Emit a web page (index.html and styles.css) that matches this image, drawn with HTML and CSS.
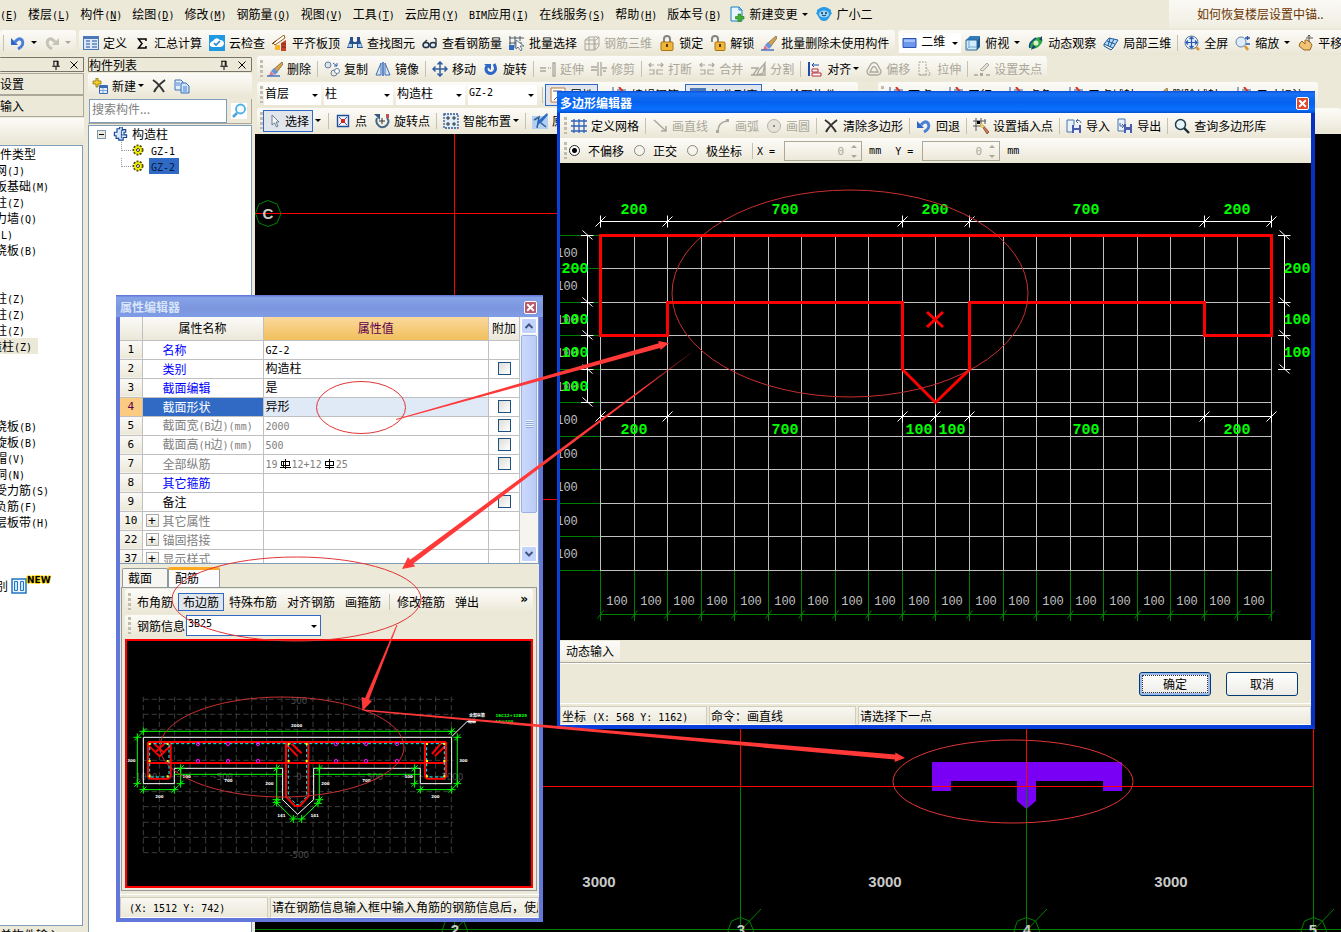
FILE: index.html
```html
<!DOCTYPE html>
<html lang="zh-CN">
<head>
<meta charset="utf-8">
<title>多边形编辑器</title>
<link rel="stylesheet" href="styles.css">
</head>
<body>
<svg class="defs" aria-hidden="true">
<defs>
<linearGradient id="fade" gradientUnits="userSpaceOnUse" x1="691" y1="353" x2="640" y2="391"><stop offset="0" stop-color="#f33" stop-opacity="0.2"/><stop offset="1" stop-color="#ff3838"/></linearGradient>
<marker id="th" markerUnits="userSpaceOnUse" markerWidth="14" markerHeight="14" refX="7" refY="7"><path d="M7 1V13M2 12L12 2" stroke="#fff" fill="none"/></marker>
<marker id="tv" markerUnits="userSpaceOnUse" markerWidth="14" markerHeight="14" refX="7" refY="7"><path d="M0 7H13M2 2L12 11" stroke="#fff" fill="none"/></marker>
<marker id="tg" markerUnits="userSpaceOnUse" markerWidth="12" markerHeight="14" refX="6" refY="7"><path d="M3 11L9 3" stroke="#008000" fill="none"/></marker>
<marker id="ts" markerUnits="userSpaceOnUse" markerWidth="30" markerHeight="30" refX="15" refY="15"><path d="M15 3V27M3 15H27M6 24L24 6" stroke="#0f0" stroke-width="3" fill="none"/></marker>
</defs>
<symbol id="undo" viewBox="0 0 16 16"><path d="M5 7Q9 2 12 5Q15 10 8 14" fill="none" stroke="#4a7fd8" stroke-width="3"/><path d="M1 3V10H8Z" fill="#2f66cc"/></symbol>
<symbol id="redo" viewBox="0 0 16 16"><path d="M11 7Q7 2 4 5Q1 10 8 14" fill="none" stroke="#c5c2b6" stroke-width="3"/><path d="M15 3V10H8Z" fill="#c5c2b6"/></symbol>
<symbol id="define" viewBox="0 0 16 16"><path d="M0 1H16V15H0Z" fill="#4a77b8"/><path d="M1 4H15V14H1Z" fill="#dce9fb"/><path d="M3 6H7M3 9H7M3 12H7M9 6H14M9 9H14M9 12H14" stroke="#1e4b92"/></symbol>
<symbol id="sum" viewBox="0 0 16 16"><path d="M12 6V4H4.500L8 8.500L4.500 13H12V11" fill="none" stroke="#000" stroke-width="1.500"/></symbol>
<symbol id="cloud" viewBox="0 0 16 16"><path d="M0 0H16V16H0Z" fill="#1f9ae0"/><path d="M4 12Q0 12 1 8Q3 6 4 6Q7 1 11 5Q15 5 15 9Q14 12 12 12Z" fill="#fff"/><path d="M5 8L7 10L11 6" fill="none" stroke="#1f8ad0" stroke-width="1.6"/></symbol>
<symbol id="roof" viewBox="0 0 16 16"><path d="M1 8L12 0L13 3L3 10Z" fill="#fff" stroke="#96601c"/><path d="M3 10H8V15H3Z" fill="#f6b626"/><path d="M9 8L14 5V16H9Z" fill="#c6422a"/><path d="M0 9L4 6M10 9H14M10 12H14" stroke="#6a2a12"/></symbol>
<symbol id="bino" viewBox="0 0 16 16"><path d="M3 2H6V6L7 7H9L10 6V2H13V5L16 13H10V9H6V13H0L3 5Z" fill="#26518f"/><path d="M2 9H5V12H1ZM11 9H14L15 12H11Z" fill="#a9c9ef"/></symbol>
<symbol id="glass" viewBox="0 0 16 16"><ellipse cx="4" cy="10" rx="3" ry="2.6" fill="#dfe9ee" stroke="#243344" stroke-width="1.5"/><ellipse cx="11" cy="10" rx="3" ry="2.6" fill="#dfe9ee" stroke="#243344" stroke-width="1.5"/><path d="M2 8L5 5M14 9V4L12 3" fill="none" stroke="#243344" stroke-width="1.3"/></symbol>
<symbol id="batch" viewBox="0 0 16 16"><path d="M1 1V15M6 1V13M0 3H15M0 8H13M11 1V6" stroke="#4b5968" fill="none"/><path d="M0 10H5V15H0Z" fill="#2f6ac4"/><path d="M7 5V14L9 12L12 16L13 14L11 11H15Z" fill="#fff" stroke="#566a7e" stroke-width=".9"/></symbol>
<symbol id="cube3" viewBox="0 0 16 16"><path d="M1 5L5 2H15V11L11 15H1ZM5 2V15M10 2V15M1 9H15M11 5V15M1 5H12L15 2" fill="none" stroke="#aaa89c"/></symbol>
<symbol id="lock" viewBox="0 0 16 16"><path d="M5 8V4Q5 1 8 1Q11 1 11 4V8" fill="none" stroke="#858585" stroke-width="2"/><rect x="2" y="7" width="12" height="8.500" rx="1" fill="#f0b638" stroke="#a97412"/><path d="M8 9V12" stroke="#543708" stroke-width="2"/></symbol>
<symbol id="unlock" viewBox="0 0 16 16"><path d="M2 7V4Q2 1 5 1Q8 1 8 4V8" fill="none" stroke="#858585" stroke-width="2"/><rect x="5" y="7" width="10" height="8.500" rx="1" fill="#f0b638" stroke="#a97412"/><path d="M10 9V12" stroke="#543708" stroke-width="2"/></symbol>
<symbol id="brush" viewBox="0 0 16 16"><path d="M15 1L7 8L10 11L16 3Z" fill="#d8a248" stroke="#6a5c3c" stroke-width=".7"/><path d="M7 7L11 11L8 14L4 10Z" fill="#6a92d6"/><path d="M4 10L7 14L2 15Z" fill="#e07090"/><path d="M0 15H13" stroke="#2b60b8" stroke-width="1.3"/></symbol>
<symbol id="flat" viewBox="0 0 16 16"><path d="M1 3.500H14V12.500H1Z" fill="#6d97ec" stroke="#2853ae"/><path d="M2 4.500H13V7H2Z" fill="#a5c1fb"/></symbol>
<symbol id="cube" viewBox="0 0 16 16"><path d="M1 5L5 1H15L12 5Z" fill="#2f7cb8"/><path d="M12 5L15 1V12L12 15Z" fill="#1c5a90"/><path d="M1 5H12V15H1Z" fill="#d4ebfb" stroke="#29699e"/><path d="M4 5V12H12M4 12L1 15" fill="none" stroke="#72a6cc"/></symbol>
<symbol id="orbit" viewBox="0 0 16 16"><ellipse cx="8" cy="8" rx="7.500" ry="4.500" transform="rotate(-40 8 8)" fill="#2fa647"/><path d="M2 13Q0 8 8 3" stroke="#1b4f86" fill="none" stroke-width="1.6"/><circle cx="8" cy="8" r="2.500" fill="#d9f1c9"/><path d="M3 15L5 10L8 12ZM11 4L14 1V6Z" fill="#1d3f70"/></symbol>
<symbol id="part" viewBox="0 0 16 16"><path d="M1 9L6 3L15 5L10 13Z" fill="#b9daf4" stroke="#1e5c9c"/><path d="M4 6L12 9M7 3L5 11M11 4L7 12M10 13L8 15L1 11V9" fill="none" stroke="#1e5c9c"/></symbol>
<symbol id="full" viewBox="0 0 16 16"><circle cx="7.500" cy="7.500" r="6.500" fill="#e4effa" stroke="#5d7896"/><path d="M7.500 2V13M2 7.500H13M5.500 4L7.500 2L9.500 4M5.500 11L7.500 13L9.500 11M4 5.500L2 7.500L4 9.500M11 5.500L13 7.500L11 9.500" fill="none" stroke="#2856b0" stroke-width="1.2"/><path d="M12 12L15 15" stroke="#d89634" stroke-width="2.500"/></symbol>
<symbol id="zoom" viewBox="0 0 16 16"><circle cx="6" cy="7" r="5" fill="#dcecfa" stroke="#6888a8"/><path d="M10 11L13 15" stroke="#d89634" stroke-width="2.600"/><path d="M10 3H15M12.500 1V5M11 9H15" stroke="#2856b0" stroke-width="1.4"/></symbol>
<symbol id="pan" viewBox="0 0 16 16"><path d="M2 8L4 6L7 9V5L9 5L12 7L14 10L12 15H6L1 11Z" fill="#f1c377" stroke="#9a6621"/><path d="M11 0V7M8 3H15M9.500 1.500L11 0L12.500 1.500" fill="none" stroke="#555"/></symbol>
<symbol id="copy" viewBox="0 0 16 16"><circle cx="4" cy="4" r="3" fill="#dce4ee" stroke="#647d9c"/><circle cx="10" cy="12" r="3" fill="none" stroke="#647d9c"/><circle cx="13" cy="10" r="2.500" fill="#fff" stroke="#647d9c"/><path d="M9 2L13 5M13 2V5H10" fill="none" stroke="#2d62b8"/></symbol>
<symbol id="mirror" viewBox="0 0 16 16"><path d="M8 1V15" stroke="#2b62b8" stroke-width="1.400"/><path d="M6 2V14H1ZM10 2V14H15Z" fill="#dbe7f7" stroke="#3c6db4"/></symbol>
<symbol id="move" viewBox="0 0 16 16"><path d="M8 1V15M1 8H15M5.500 3.500L8 1L10.500 3.500M5.500 12.500L8 15L10.500 12.500M3.500 5.500L1 8L3.500 10.500M12.500 5.500L15 8L12.500 10.500" fill="none" stroke="#2f5d9e" stroke-width="1.500"/></symbol>
<symbol id="rotate" viewBox="0 0 16 16"><path d="M11 3Q14 8 11 11Q8 14 4 11Q2 8 4 5" fill="none" stroke="#2c67c8" stroke-width="3"/><path d="M1 3H8V9Z" fill="#2c67c8"/></symbol>
<symbol id="extend" viewBox="0 0 16 16"><path d="M0 7H6M8 7H9M10 7H11M0 10H6M13 2V15H15V2Z" fill="none" stroke="#aaa89c" stroke-width="1.300"/></symbol>
<symbol id="trim" viewBox="0 0 16 16"><path d="M0 6H6M0 9H6M7 1V15M10 1V15M11 7H16M12 10H15" stroke="#aaa89c" stroke-width="1.300"/></symbol>
<symbol id="split" viewBox="0 0 16 16"><path d="M1 4H6M9 4H15M3 2L1 4L3 6M13 2L15 4L13 6M1 9H6V13H1M15 9H9V13H15" fill="none" stroke="#aaa89c" stroke-width="1.200"/></symbol>
<symbol id="cut" viewBox="0 0 16 16"><path d="M1 14H15V4M1 7H8L3 14M9 9L15 2L13 12L7 14Z" fill="none" stroke="#aaa89c" stroke-width="1.300"/></symbol>
<symbol id="align" viewBox="0 0 16 16"><path d="M2 1V15" stroke="#1d4da4" stroke-width="2"/><path d="M5 4H12M7 2L5 4L7 6" fill="none" stroke="#1d4da4"/><path d="M5 8H11V11H5ZM5 12H14V15H5Z" fill="#fff" stroke="#b8283a"/></symbol>
<symbol id="offset" viewBox="0 0 16 16"><path d="M5 3Q8 0 11 3L15 10Q15 14 11 14H5Q1 14 1 10ZM6 7Q8 4 10 7L12 11H4Z" fill="none" stroke="#aaa89c" stroke-width="1.300"/></symbol>
<symbol id="stretch" viewBox="0 0 16 16"><path d="M2 1H9V14H2ZM2 14H14M9 6L14 14" fill="none" stroke="#aaa89c" stroke-dasharray="2 1"/></symbol>
<symbol id="grip" viewBox="0 0 16 16"><path d="M0 14H4M12 14H16" stroke="#aaa89c" stroke-width="1.500"/><path d="M6 12H9V15H6Z" fill="#aaa89c"/><path d="M6 9L13 2L15 4L9 10Z" fill="#e2dfd4" stroke="#aaa89c"/></symbol>
<symbol id="pick" viewBox="0 0 16 16"><path d="M5 2V12L7.500 10L9.500 14L11 13L9 9H12Z" fill="#f4f6f8" stroke="#6c7d90"/></symbol>
<symbol id="point" viewBox="0 0 16 16"><path d="M2.500 2.500H13.500V13.500H2.500Z" fill="#f1f5fd" stroke="#234c99" stroke-width="1.400"/><path d="M4 4L12 12M12 4L4 12" stroke="#358"/><path d="M6 6H10V10H6Z" fill="#d22"/></symbol>
<symbol id="rotpt" viewBox="0 0 16 16"><path d="M3 5Q1 10 5 13Q9 16 13 12Q16 8 13 5" fill="none" stroke="#476788" stroke-width="2"/><path d="M0 1H6V7Z" fill="#385a80"/><path d="M8 5V11M5 8H11" stroke="#333"/><path d="M12 1H15V5H12Z" fill="#b55"/></symbol>
<symbol id="smart" viewBox="0 0 16 16"><path d="M1 1H15V15H1Z" fill="#e3edf8" stroke="#2c5796" stroke-width="1.300" stroke-dasharray="2 1"/><path d="M5 3V7M3 5H7M11 3V7M9 5H13M5 9V13M3 11H7M11 9V13M9 11H13" stroke="#233"/></symbol>
<symbol id="edit" viewBox="0 0 16 16"><path d="M0 3H16V16H0Z" fill="#b3d0f2"/><path d="M2 7L7 4L5 15M9 10L14 14" fill="none" stroke="#315f98" stroke-width="1.500"/><path d="M15 0L6 8L5 12L9 10L16 2Z" fill="#2d6dc0"/></symbol>
<symbol id="prop" viewBox="0 0 16 16"><path d="M1 1H15V15H1Z" fill="#fff" stroke="#bf7632"/><path d="M3 4H12M4 13L12 5" stroke="#557"/></symbol>
<symbol id="redmark" viewBox="0 0 16 16"><path d="M2 0V15M6 3H15" stroke="#3455a0"/><path d="M8 0L13 6" stroke="#d32" stroke-width="2"/></symbol>
<symbol id="newlist" viewBox="0 0 16 16"><path d="M4 0H6V3H9V6H6V9H4V6H1V3H4Z" fill="#f4cf2c" stroke="#8c7209" stroke-width=".8"/><path d="M7.500 7.500H15.500V15.500H7.500Z" fill="#e2effe" stroke="#3b6ab5"/><path d="M8 9H15" stroke="#3b6ab5" stroke-width="2"/><path d="M11 10V15M8 12.500H15" stroke="#83a6d8"/></symbol>
<symbol id="del" viewBox="0 0 16 16"><path d="M2 2Q8 6 13 14M14 2Q6 8 3 14" fill="none" stroke="#343434" stroke-width="2"/></symbol>
<symbol id="pages" viewBox="0 0 16 16"><path d="M1 2H7L9 4V12H1Z" fill="#e4effc" stroke="#3d70b8"/><path d="M7 5H12L15 8V15H7Z" fill="#cfe2fa" stroke="#3d70b8"/><path d="M2 5H6M2 7H6M9 9H13M9 11H13M9 13H13" stroke="#4e86cf"/></symbol>
<symbol id="search" viewBox="0 0 16 16"><circle cx="9.500" cy="6" r="4.500" fill="#f3fbff" stroke="#4fb0e6" stroke-width="1.800"/><path d="M6 10L2 14" stroke="#4fa4de" stroke-width="2.600"/></symbol>
<symbol id="column" viewBox="0 0 16 16"><path d="M4 2H7V0H10V3H14V6H12V9H15V12H11V15H6V13H3V10H1V6H4Z" fill="#dbe9fc" stroke="#174594" stroke-width="1.300"/><path d="M9 4V13M9 4H11M9 9H11" stroke="#174594" fill="none"/></symbol>
<symbol id="gear" viewBox="0 0 12 12"><circle cx="6" cy="6" r="4.500" fill="#ff0" stroke="#554d00" stroke-width="2" stroke-dasharray="2 1.200"/><circle cx="6" cy="6" r="3.600" fill="#f8ee00"/><circle cx="6" cy="6" r="1.500" fill="#fff" stroke="#333"/></symbol>
<symbol id="grid" viewBox="0 0 16 16"><path d="M3 1V15M8 1V15M13 1V15M0 3H16M0 8H16M0 13H16" stroke="#2e62b8" stroke-width="1.300"/></symbol>
<symbol id="gline" viewBox="0 0 16 16"><path d="M2 2L14 13M14 8V13H9" fill="none" stroke="#aaa89c" stroke-width="1.500"/></symbol>
<symbol id="garc" viewBox="0 0 16 16"><path d="M3 14Q3 4 12 3" fill="none" stroke="#aaa89c" stroke-width="1.500"/><path d="M1 12H4V15H1ZM11 1H14V4H11Z" fill="#aaa89c"/></symbol>
<symbol id="gcirc" viewBox="0 0 16 16"><circle cx="8" cy="8" r="6.500" fill="#e6e3d9" stroke="#b6b3a8"/><path d="M7 7H9V9H7Z" fill="#888"/></symbol>
<symbol id="insert" viewBox="0 0 16 16"><path d="M3 0V13M8 0V8M0 3H13M0 8H8M12 1V6" stroke="#555"/><path d="M4 3H7V6H4Z" fill="#000"/><path d="M7 5L9 6L16 14L14 16Z" fill="#d77b55" stroke="#6b3a26" stroke-width=".7"/><path d="M7 5L10 6L11 9L8 10Z" fill="#e9d464"/></symbol>
<symbol id="import" viewBox="0 0 16 16"><path d="M1 2H8V14H1Z" fill="#e8f1fc" stroke="#4b76ac"/><path d="M15 5Q14 1 10 3M12 1L10 3L12 5" fill="none" stroke="#4668a0"/><path d="M6 7H15V15H6Z" fill="#4a5cab"/><path d="M8 7H13V10H8ZM8 12H13V15H8Z" fill="#eaf0fb"/></symbol>
<symbol id="export" viewBox="0 0 16 16"><path d="M1 1H8V13H1Z" fill="#e8f1fc" stroke="#4b76ac"/><path d="M3 5V8H7M5 6L7 8L5 10" fill="none" stroke="#4668a0"/><path d="M7 6H15V15H7Z" fill="#4a5cab"/><path d="M9 6H13V9H9ZM9 12H13V15H9Z" fill="#eaf0fb"/></symbol>
<symbol id="query" viewBox="0 0 16 16"><circle cx="6.500" cy="6.500" r="5" fill="#e6f5fb" stroke="#1e3c4c" stroke-width="1.500"/><path d="M10 10L15 15" stroke="#1a2c38" stroke-width="2.400"/></symbol>
<symbol id="newdoc" viewBox="0 0 16 16"><path d="M2 1H10L13 4V15H2Z" fill="#e7f5ff" stroke="#1e7fc0"/><path d="M10 1V4H13" fill="none" stroke="#1e7fc0"/><path d="M9 8H12V10.500H15V13H12V16H9V13H6.500V10.500H9Z" fill="#41b332" stroke="#257a1c" stroke-width=".6"/></symbol>
<symbol id="robot" viewBox="0 0 16 16"><path d="M1 4L4 2Q8 0 12 2L15 4V6L16 7L14 10Q12 15 8 15Q4 15 2 10L0 7L1 6Z" fill="#2a9be6"/><ellipse cx="8" cy="8" rx="5" ry="3.500" fill="#9fd8fa"/><circle cx="6" cy="7" r="1" fill="#135"/><circle cx="10" cy="7" r="1" fill="#135"/><path d="M6 9Q8 11 10 9" stroke="#135" fill="none"/></symbol>
<symbol id="pin" viewBox="0 0 12 12"><path d="M3.500 1V7M8.500 1V7M3 1.500H8M7.500 1V7M1.500 7.500H10.500M6 8V12" stroke="#000" stroke-width="1.200"/></symbol>
<symbol id="x" viewBox="0 0 10 10"><path d="M1.500 1.500L8.500 8.500M8.500 1.500L1.500 8.500" stroke="#000"/></symbol>
<symbol id="wx" viewBox="0 0 10 10"><path d="M2 2L8 8M8 2L2 8" stroke="#fff" stroke-width="1.800"/></symbol>
<symbol id="up" viewBox="0 0 10 10"><path d="M1.500 7L5 3.500L8.500 7" fill="none" stroke="#3f5786" stroke-width="2"/></symbol>
<symbol id="down" viewBox="0 0 10 10"><path d="M1.500 3L5 6.500L8.500 3" fill="none" stroke="#3f5786" stroke-width="2"/></symbol>
<symbol id="card" viewBox="0 0 16 16"><path d="M1 1H15V15H1Z" fill="#eaf5ff" stroke="#2275c2" stroke-width="1.500"/><path d="M3.500 3.500H6.500V12.500H3.500ZM9.500 3.500H12.500V12.500H9.500Z" fill="#cfe6fb" stroke="#2275c2"/></symbol>
</svg>

<div class="app">
<nav class="menubar">
  <button><i>(<u>E</u>)</i></button><button>楼层<i>(<u>L</u>)</i></button><button>构件<i>(<u>N</u>)</i></button><button>绘图<i>(<u>D</u>)</i></button><button>修改<i>(<u>M</u>)</i></button><button>钢筋量<i>(<u>Q</u>)</i></button><button>视图<i>(<u>V</u>)</i></button><button>工具<i>(<u>T</u>)</i></button><button>云应用<i>(<u>Y</u>)</i></button><button><i>BIM</i>应用<i>(<u>I</u>)</i></button><button>在线服务<i>(<u>S</u>)</i></button><button>帮助<i>(<u>H</u>)</i></button><button>版本号<i>(<u>B</u>)</i></button>
  <div class="extras"><button class="tb"><svg><use href="#newdoc"/></svg>新建变更<b class="caret wide"></b></button><button class="tb"><svg><use href="#robot"/></svg>广小二</button></div>
  <a class="tip" href="#">如何恢复楼层设置中锚..</a>
</nav>

<div class="row topbar">
  <div class="band history"><span class="sep"></span><button class="tb" aria-label="撤销"><svg><use href="#undo"/></svg><b class="caret wide"></b></button><button class="tb off" aria-label="恢复"><svg><use href="#redo"/></svg><b class="caret wide"></b></button></div>
  <div class="band"><button class="tb"><svg><use href="#define"/></svg>定义</button><button class="tb"><svg><use href="#sum"/></svg>汇总计算</button><button class="tb"><svg><use href="#cloud"/></svg>云检查</button><button class="tb"><svg><use href="#roof"/></svg>平齐板顶</button><button class="tb"><svg><use href="#bino"/></svg>查找图元</button><button class="tb"><svg><use href="#glass"/></svg>查看钢筋量</button><button class="tb"><svg><use href="#batch"/></svg>批量选择</button><button class="tb off"><svg><use href="#cube3"/></svg>钢筋三维</button><button class="tb"><svg><use href="#lock"/></svg>锁定</button><button class="tb"><svg><use href="#unlock"/></svg>解锁</button><button class="tb"><svg><use href="#brush"/></svg>批量删除未使用构件</button></div>
  <div class="band view"><label class="combo dim"><svg><use href="#flat"/></svg><select aria-label="视图模式"><option>二维</option></select></label><button class="tb"><svg><use href="#cube"/></svg>俯视<b class="caret wide"></b></button><button class="tb"><svg><use href="#orbit"/></svg>动态观察</button><button class="tb"><svg><use href="#part"/></svg>局部三维</button><span class="sep"></span><button class="tb"><svg><use href="#full"/></svg>全屏</button><button class="tb"><svg><use href="#zoom"/></svg>缩放<b class="caret wide"></b></button><button class="tb"><svg><use href="#pan"/></svg>平移</button></div>
</div>

<div class="workspace">
<aside class="nav">
  <header class="cap"><span></span><svg><use href="#pin"/></svg><svg><use href="#x"/></svg></header>
  <button class="slab">设置</button><button class="slab">输入</button>
  <div class="strip"></div>
  <ul class="types">
    <li class="flush">件类型</li><li>网<i>(J)</i></li><li>板基础<i>(M)</i></li><li>柱<i>(Z)</i></li><li>力墙<i>(Q)</i></li><li><i>(L)</i></li><li>浇板<i>(B)</i></li><li></li><li></li><li>柱<i>(Z)</i></li><li>柱<i>(Z)</i></li><li>柱<i>(Z)</i></li><li><span class="on">造柱<i>(Z)</i></span></li><li></li><li></li><li></li><li></li><li>浇板<i>(B)</i></li><li>旋板<i>(B)</i></li><li>帽<i>(V)</i></li><li>洞<i>(N)</i></li><li>受力筋<i>(S)</i></li><li>负筋<i>(F)</i></li><li>层板带<i>(H)</i></li><li></li><li></li><li></li><li class="fresh">别<svg><use href="#card"/></svg><em>NEW</em></li>
  </ul>
  <button class="foot">单构件输入</button>
</aside>

<aside class="list">
  <header class="cap"><span>构件列表</span><svg><use href="#pin"/></svg><svg><use href="#x"/></svg></header>
  <div class="band listbar"><button class="tb"><svg><use href="#newlist"/></svg>新建<b class="caret"></b></button><button class="tb" aria-label="删除"><svg><use href="#del"/></svg></button><button class="tb" aria-label="复制"><svg><use href="#pages"/></svg></button></div>
  <div class="find"><input type="text" placeholder="搜索构件..." aria-label="搜索构件"><button aria-label="搜索"><svg><use href="#search"/></svg></button></div>
  <div class="tree">
    <div class="node root"><span class="fold"></span><svg><use href="#column"/></svg>构造柱</div>
    <div class="node leaf"><svg><use href="#gear"/></svg><span><i>GZ-1</i></span></div>
    <div class="node leaf"><svg><use href="#gear"/></svg><span class="sel"><i>GZ-2</i></span></div>
  </div>
</aside>

<main class="main">
  <div class="row"><div class="band gripped"><button class="tb"><svg><use href="#brush"/></svg>删除</button><span class="sep"></span><button class="tb"><svg><use href="#copy"/></svg>复制</button><button class="tb"><svg><use href="#mirror"/></svg>镜像</button><span class="sep"></span><button class="tb"><svg><use href="#move"/></svg>移动</button><button class="tb"><svg><use href="#rotate"/></svg>旋转</button><span class="sep"></span><button class="tb off"><svg><use href="#extend"/></svg>延伸</button><button class="tb off"><svg><use href="#trim"/></svg>修剪</button><span class="sep"></span><button class="tb off"><svg><use href="#split"/></svg>打断</button><button class="tb off"><svg><use href="#split"/></svg>合并</button><button class="tb off"><svg><use href="#cut"/></svg>分割</button><span class="sep"></span><button class="tb"><svg><use href="#align"/></svg>对齐<b class="caret"></b></button><button class="tb off"><svg><use href="#offset"/></svg>偏移</button><button class="tb off"><svg><use href="#stretch"/></svg>拉伸</button><span class="sep"></span><button class="tb off"><svg><use href="#grip"/></svg>设置夹点</button></div></div>
  <div class="row"><div class="band gripped picks"><label class="combo small"><select aria-label="楼层"><option>首层</option></select></label><label class="combo"><select aria-label="类型"><option>柱</option></select></label><label class="combo"><select aria-label="构件类型"><option>构造柱</option></select></label><label class="combo latin"><select aria-label="构件"><option>GZ-2</option></select></label><span class="sep"></span><button class="tb down"><svg><use href="#prop"/></svg>属性</button><button class="tb"><svg><use href="#redmark"/></svg>编辑钢筋</button><button class="tb down"><svg><use href="#define"/></svg>构件列表</button><button class="tb"><svg><use href="#pick"/></svg>拾取构件</button></div>
  <div class="band gripped axes"><button class="tb"><svg><use href="#redmark"/></svg>两点</button><button class="tb"><svg><use href="#redmark"/></svg>平行</button><button class="tb"><svg><use href="#redmark"/></svg>点角</button><button class="tb"><svg><use href="#redmark"/></svg>三点辅轴</button><button class="tb"><svg><use href="#brush"/></svg>删除辅轴</button><button class="tb"><svg><use href="#redmark"/></svg>尺寸标注</button></div></div>
  <div class="row"><div class="band gripped stretch"><button class="tb down"><svg><use href="#pick"/></svg>选择</button><b class="caret wide"></b><span class="sep"></span><button class="tb"><svg><use href="#point"/></svg>点</button><button class="tb"><svg><use href="#rotpt"/></svg>旋转点</button><span class="sep"></span><button class="tb"><svg><use href="#smart"/></svg>智能布置<b class="caret"></b></button><span class="sep"></span><button class="tb"><svg><use href="#edit"/></svg>原位标注</button></div></div>
  <div class="model">
    <svg><g transform="translate(-255 -134)" fill="none">
      <path d="M255 929.500H1341M454.500 786V932M740.500 786V932M1026.500 786V932M1313.500 786V932" stroke="#008000"/>
      <path d="M932 762H1122V791H1103V781H1036V801L1026.500 809L1017 801V781H951V791H932Z" fill="#7a00f5"/>
      <path d="M255 213.500H1313M255 499.500H1313M255 786.500H1313M454.500 134V786M740.500 134V786M1026.500 134V786M1313.500 728V786" stroke="#f00"/>
      <path d="M1026.500 787V809" stroke="#008000"/>
      <g stroke="#008000"><path id="bub" d="M268 200.500L277 204L281 213.500L277 223L268 226.500L259 223L255.500 213.500L259 204Z"/><use href="#bub" x="186.500" y="717"/><use href="#bub" x="472.500" y="717"/><use href="#bub" x="758.500" y="717"/><use href="#bub" x="1045.500" y="717"/><path d="M740 931L761 909M1026 931L1047 909M1313 931L1334 909M454 931L475 909"/></g>
      <g class="axis"><text x="268" y="219">C</text><text x="455" y="935">2</text><text x="741" y="935">3</text><text x="1027" y="935">4</text><text x="1313" y="935">5</text><text x="599" y="887">3000</text><text x="885" y="887">3000</text><text x="1171" y="887">3000</text></g>
    </g></svg>
  </div>
</main>
</div>
</div>

<section class="win props">
  <header><h2>属性编辑器</h2><button class="close" aria-label="关闭"><svg><use href="#wx"/></svg></button></header>
  <div class="sheet">
    <table>
      <thead><tr><th class="n"></th><th class="name">属性名称</th><th class="val">属性值</th><th class="add">附加</th></tr></thead>
      <tbody>
      <tr><th>1</th><td class="blue">名称</td><td><i>GZ-2</i></td><td></td></tr>
      <tr><th>2</th><td class="blue">类别</td><td>构造柱</td><td><input type="checkbox" aria-label="类别 附加"></td></tr>
      <tr><th>3</th><td class="blue">截面编辑</td><td>是</td><td></td></tr>
      <tr class="cur"><th>4</th><td>截面形状</td><td>异形</td><td><input type="checkbox" aria-label="截面形状 附加"></td></tr>
      <tr class="dim"><th>5</th><td>截面宽<i>(B</i>边<i>)(mm)</i></td><td><i>2000</i></td><td><input type="checkbox" aria-label="截面宽 附加"></td></tr>
      <tr class="dim"><th>6</th><td>截面高<i>(H</i>边<i>)(mm)</i></td><td><i>500</i></td><td><input type="checkbox" aria-label="截面高 附加"></td></tr>
      <tr class="dim"><th>7</th><td>全部纵筋</td><td><i>19</i><svg class="bar" viewBox="0 0 12 12"><path d="M6.500 1V11M2.500 3.500H10.500V7.500H2.500ZM4.500 3V10M1 9.500H12" fill="none" stroke="#000" shape-rendering="crispEdges"/></svg><i>12+12</i><svg class="bar" viewBox="0 0 12 12"><path d="M6.500 1V11M2.500 3.500H10.500V7.500H2.500ZM2 9.500H11" fill="none" stroke="#000" shape-rendering="crispEdges"/></svg><i>25</i></td><td><input type="checkbox" aria-label="全部纵筋 附加"></td></tr>
      <tr><th>8</th><td class="blue">其它箍筋</td><td></td><td></td></tr>
      <tr><th>9</th><td>备注</td><td></td><td><input type="checkbox" aria-label="备注 附加"></td></tr>
      <tr class="dim group"><th>10</th><td><button>+</button>其它属性</td><td></td><td></td></tr>
      <tr class="dim group"><th>22</th><td><button>+</button>锚固搭接</td><td></td><td></td></tr>
      <tr class="dim group"><th>37</th><td><button>+</button>显示样式</td><td></td><td></td></tr>
      </tbody>
    </table>
    <div class="scroll"><button aria-label="向上"><svg><use href="#up"/></svg></button><span class="thumb"><span class="ridges"></span></span><button aria-label="向下"><svg><use href="#down"/></svg></button></div>
  </div>
  <div class="tabs"><button>截面</button><button class="act">配筋</button></div>
  <div class="page">
    <div class="band gripped bars"><button>布角筋</button><button class="down">布边筋</button><button>特殊布筋</button><button>对齐钢筋</button><button>画箍筋</button><span class="sep"></span><button>修改箍筋</button><button>弹出</button><button class="more">»</button></div>
    <div class="inforow"><div class="band gripped"><label for="rebar">钢筋信息</label></div><span class="combo rebar latin"><select id="rebar"><option>3B25</option></select></span></div>
    <div class="section">
      <svg><g transform="translate(-7 -1) scale(.3333)" fill="none" stroke-width="3">
        <path stroke="#3c3c3c" stroke-dasharray="16 9" d="M70 170V645M118 170V645M164 170V645M210 170V645M257 170V645M303 170V645M349 170V645M395 170V645M440 170V645M486 170V645M532 170V645M579 170V645M625 170V645M671 170V645M717 170V645M763 170V645M810 170V645M856 170V645M901 170V645M947 170V645M994 170V645M70 178H1000M70 223H1000M70 268H1000M70 361H1000M70 409H1000M70 455H1000M70 500H1000M70 547H1000M70 592H1000M70 638H1000"/>
        <g class="rule"><text x="537" y="191">500</text><text x="75" y="421">-1000</text><text x="310" y="421">-500</text><text x="537" y="421">0</text><text x="765" y="421">500</text><text x="997" y="421">1000</text><text x="538" y="653">-500</text></g>
        <path stroke="#fff" d="M70 292H995V431H901V385H581V479L533 523L488 479V385H163V431H70ZM995 290L1041 245H1068"/>
        <g stroke="#0f0" class="smalldims"><path d="M70 274H995"/><path d="M52 292V431"/><path d="M1012 292V431"/><path d="M182 385V431"/><path d="M163 403H488" class="bare"/><path d="M70 449H163"/><path d="M470 385V479"/><path d="M598 385V479"/><path d="M581 403H901" class="bare"/><path d="M884 385V431"/><path d="M901 449H995"/><path d="M470 488L520 537"/><path d="M594 490L545 537"/></g>
        <g stroke="#f00" stroke-width="6"><path d="M84 306H978M84 369H978"/><path d="M84 306V405Q84 416 95 416H141Q152 416 152 405V306M915 306V405Q915 416 926 416H967Q978 416 978 405V306M498 306V470L525 498H540L565 470V306"/><path d="M86 317L120 350M100 308L130 337M150 319L118 350M136 308L106 337M501 316L532 348M515 311L545 340M976 318L945 348M965 308L936 342"/></g>
        <path stroke="#0ff" stroke-dasharray="9 7" d="M89 411V311H147V411ZM152 311H915M505 311V470L530 494H536L560 470V311M920 411V311H973V411Z"/>
        <g stroke="#f0f"><circle cx="234" cy="312" r="5"/><circle cx="324" cy="312" r="5"/><circle cx="414" cy="312" r="5"/><circle cx="648" cy="312" r="5"/><circle cx="738" cy="312" r="5"/><circle cx="831" cy="312" r="5"/><circle cx="234" cy="363" r="5"/><circle cx="324" cy="363" r="5"/><circle cx="414" cy="363" r="5"/><circle cx="648" cy="363" r="5"/><circle cx="738" cy="363" r="5"/><circle cx="831" cy="363" r="5"/></g>
        <path fill="#ff0" d="M86 309h6v6h-6zM140 309h6v6h-6zM86 360h6v6h-6zM140 360h6v6h-6zM86 406h6v6h-6zM140 406h6v6h-6zM503 309h6v6h-6zM557 309h6v6h-6zM503 360h6v6h-6zM557 360h6v6h-6zM918 309h6v6h-6zM970 309h6v6h-6zM918 360h6v6h-6zM970 360h6v6h-6zM918 406h6v6h-6zM970 406h6v6h-6z"/>
        <g class="tiny"><text x="530" y="261">2000</text><text x="34" y="366">300</text><text x="1030" y="366">300</text><text x="200" y="414">100</text><text x="866" y="414">100</text><text x="325" y="426">700</text><text x="739" y="426">700</text><text x="448" y="435">200</text><text x="616" y="435">200</text><text x="118" y="474">200</text><text x="946" y="474">200</text><text x="484" y="531">141</text><text x="584" y="531">141</text><text x="1071" y="232">全部纵筋</text><text x="1056" y="249">箍筋</text><text x="1174" y="231" class="lime">19C12+12B25</text><text x="1153" y="249" class="lime">12@100</text></g>
      </g></svg>
    </div>
  </div>
  <footer class="status"><span class="pos"><i>(X: 1512 Y: 742)</i></span><span>请在钢筋信息输入框中输入角筋的钢筋信息后，使用鼠标</span></footer>
</section>

<section class="win poly">
  <header><h2>多边形编辑器</h2><button class="close" aria-label="关闭"><svg><use href="#wx"/></svg></button></header>
  <div class="band gripped"><button class="tb"><svg><use href="#grid"/></svg>定义网格</button><span class="sep"></span><button class="tb off"><svg><use href="#gline"/></svg>画直线</button><button class="tb off"><svg><use href="#garc"/></svg>画弧</button><button class="tb off"><svg><use href="#gcirc"/></svg>画圆</button><span class="sep"></span><button class="tb"><svg><use href="#del"/></svg>清除多边形</button><span class="sep"></span><button class="tb"><svg><use href="#undo"/></svg>回退</button><span class="sep"></span><button class="tb"><svg><use href="#insert"/></svg>设置插入点</button><span class="sep"></span><button class="tb"><svg><use href="#import"/></svg>导入</button><button class="tb"><svg><use href="#export"/></svg>导出</button><span class="sep"></span><button class="tb"><svg><use href="#query"/></svg>查询多边形库</button></div>
  <div class="band gripped coords"><label class="opt"><input type="radio" name="off" checked>不偏移</label><label class="opt"><input type="radio" name="off">正交</label><label class="opt"><input type="radio" name="off">极坐标</label><span class="sep"></span><label for="cx"><i>X =</i></label><span class="spin"><input id="cx" type="text" value="0" disabled></span><i class="unit">mm</i><label for="cy"><i>Y =</i></label><span class="spin"><input id="cy" type="text" value="0" disabled></span><i class="unit">mm</i></div>
  <div class="board">
    <svg><g transform="translate(-560 -163)" fill="none">
      <path stroke="#008000" d="M560 235.500H600M560 268.500H600M560 302.500H600M560 335.500H600M560 369.500H600M560 402.500H600M560 436.500H600M560 469.500H600M560 503.500H600M560 536.500H600M560 570.500H600M600.500 570V621M634.500 570V621M667.500 570V621M701.500 570V621M734.500 570V621M768.500 570V621M801.500 570V621M835.500 570V621M868.500 570V621M902.500 570V621M935.500 570V621M969.500 570V621M1003.500 570V621M1036.500 570V621M1070.500 570V621M1103.500 570V621M1137.500 570V621M1170.500 570V621M1204.500 570V621M1237.500 570V621M1271.500 570V621"/>
      <path class="green-ticks" stroke="#008000" d="M600.500 614.500H634.500H667.500H701.500H734.500H768.500H801.500H835.500H868.500H902.500H935.500H969.500H1003.500H1036.500H1070.500H1103.500H1137.500H1170.500H1204.500H1237.500H1271.500"/>
      <path stroke="#c0c0c0" d="M600 235.500H1272M600 268.500H1272M600 302.500H1272M600 335.500H1272M600 369.500H1272M600 402.500H1272M600 436.500H1272M600 469.500H1272M600 503.500H1272M600 536.500H1272M600 570.500H1272M600.500 235V570M634.500 235V570M667.500 235V570M701.500 235V570M734.500 235V570M768.500 235V570M801.500 235V570M835.500 235V570M868.500 235V570M902.500 235V570M935.500 235V570M969.500 235V570M1003.500 235V570M1036.500 235V570M1070.500 235V570M1103.500 235V570M1137.500 235V570M1170.500 235V570M1204.500 235V570M1237.500 235V570M1271.500 235V570"/>
      <g class="gray"><text x="567" y="257">100</text><text x="567" y="290">100</text><text x="567" y="324">100</text><text x="567" y="357">100</text><text x="567" y="391">100</text><text x="567" y="424">100</text><text x="567" y="458">100</text><text x="567" y="491">100</text><text x="567" y="525">100</text><text x="567" y="558">100</text>
      <text x="617" y="605">100</text><text x="651" y="605">100</text><text x="684" y="605">100</text><text x="717" y="605">100</text><text x="751" y="605">100</text><text x="785" y="605">100</text><text x="818" y="605">100</text><text x="852" y="605">100</text><text x="885" y="605">100</text><text x="919" y="605">100</text><text x="952" y="605">100</text><text x="986" y="605">100</text><text x="1019" y="605">100</text><text x="1053" y="605">100</text><text x="1086" y="605">100</text><text x="1120" y="605">100</text><text x="1154" y="605">100</text><text x="1187" y="605">100</text><text x="1220" y="605">100</text><text x="1254" y="605">100</text></g>
      <path class="h-ticks" stroke="#fff" d="M600.500 221.500H667.500H902.500H969.500H1204.500H1271.500"/>
      <path class="h-ticks" stroke="#fff" d="M600.500 416.500H667.500H902.500H935.500H969.500H1204.500H1271.500"/>
      <path class="v-ticks" stroke="#fff" d="M587.500 235.500V302.500V335.500V369.500V402.500"/>
      <path class="v-ticks" stroke="#fff" d="M1284.500 235.500V302.500V335.500V369.500"/>
      <path stroke="#f00" stroke-width="3" d="M600.500 235.500H1271.500V335.500H1204.500V302.500H969.500V369.500L935.500 402.500L902.500 369.500V302.500H667.500V335.500H600.500ZM927 312L943 327M943 312L927 327"/>
      <g class="dimtext"><text x="634" y="214">200</text><text x="785" y="214">700</text><text x="935" y="214">200</text><text x="1086" y="214">700</text><text x="1237" y="214">200</text><text x="634" y="434">200</text><text x="785" y="434">700</text><text x="919" y="434">100</text><text x="952" y="434">100</text><text x="1086" y="434">700</text><text x="1237" y="434">200</text><text x="575" y="273">200</text><text x="575" y="324">100</text><text x="575" y="357">100</text><text x="575" y="391">100</text><text x="1297" y="273">200</text><text x="1297" y="324">100</text><text x="1297" y="357">100</text></g>
    </g></svg>
  </div>
  <div class="dyn"><button>动态输入</button></div>
  <div class="actions"><button class="ok">确定</button><button>取消</button></div>
  <footer class="status"><span class="cell">坐标<i>&nbsp;(X: 568 Y: 1162)</i></span><span class="cell">命令：画直线</span><span>请选择下一点</span></footer>
</section>

<svg class="notes" aria-hidden="true">
  <g fill="none" stroke="#e03636"><ellipse cx="361" cy="407.500" rx="44.500" ry="26"/><ellipse cx="850" cy="293.500" rx="178" ry="103.500" stroke="#c83030"/><ellipse cx="296.500" cy="599" rx="124.500" ry="42"/><ellipse cx="282" cy="747" rx="122" ry="50" stroke="#c83030"/><ellipse cx="1013" cy="781.500" rx="120" ry="41.500"/></g>
  <g fill="#ff3838"><path d="M396 419L658.700 343.300L658.200 341L669 343L660.600 350L660 348.100L396 420Z"/><path fill="url(#fade)" d="M691 352.500L410.100 559.800L408 557L402 569L415.200 566.600L413.100 563.800L691 353.500Z"/><path d="M396.500 625L365.100 698.100L361.500 697L362.500 711L372 701L368.900 699.700L397.500 625Z"/><path d="M364 709.500L895.200 754.600L895.400 752.600L905 758L894.600 762L894.800 759.600L364 711Z"/></g>
</svg>
</body>
</html>
```
FILE: styles.css
```css
* { box-sizing: border-box; }
html, body { height: 100%; margin: 0; }
body {
  position: relative;
  overflow: hidden;
  background: #ece9d8;
  color: #000;
  font: 12px/16px "Noto Sans CJK SC", sans-serif;
}
button, input, select { font: inherit; color: inherit; margin: 0; padding: 0; border: 0; background: none; white-space: nowrap; border-radius: 0; }
i, .latin select { font: 10px/14px "DejaVu Sans Mono", monospace; }
svg { display: block; flex: none; }
.defs { position: absolute; width: 0; height: 0; }

.app { display: flex; flex-direction: column; height: 100vh; min-width: 0; }

/* Menu */
.menubar { display: flex; align-items: center; gap: 10px; height: 28px; flex: none; white-space: nowrap; overflow: hidden; }
.menubar > button { flex: none; }
.extras { display: flex; margin-left: -6px; }
.tip { margin-left: auto; align-self: stretch; width: 172px; flex: none; padding: 6px 0 0 28px; color: #6b3500; text-decoration: none; background: linear-gradient(#faf9f5, #f0eee2); }

/* Toolbars */
.row { display: flex; flex: none; height: 26px; overflow: hidden; }
.topbar { height: 28px; padding-top: 2px; gap: 3px; }
.band { display: flex; align-items: center; flex: none; height: 25px; padding: 0 2px 0 0; white-space: nowrap; background: linear-gradient(#fcfbf8, #f4f2e8 50%, #eae6d5); border-radius: 3px; }
.history .tb { padding-right: 2px; }
.topbar > .band:nth-child(2) { padding-right: 3px; }
.view { flex: 1 0 0; gap: 0; padding-left: 1px; }
.gripped::before { content: ""; width: 3px; height: 17px; margin: 0 0 0 3px; background: repeating-linear-gradient(#c1bdad 0 3px, transparent 3px 5px); flex: none; }
.tb { display: flex; align-items: center; gap: 4px; flex: none; height: 22px; padding: 0 3px 0 4px; }
.tb svg { width: 16px; height: 16px; }
.off { color: #aaa79a; }
.down { border: 1px solid #316ac5; background: #e1e6ec; }
.sep { width: 1px; height: 16px; margin: 0 2px 0 3px; background: #c5c2b2; flex: none; }
.caret { width: 8px; margin-left: -4px; display: flex; justify-content: flex-end; flex: none; }
.caret.wide { width: 12px; justify-content: center; padding-left: 4px; }
.caret::after { content: ""; border: 3px solid transparent; border-top-color: #000; border-bottom: 0; }
.off .caret::after { border-top-color: #aaa79a; }
.combo { position: relative; display: flex; align-items: center; flex: none; width: 69px; height: 20px; background: #fff; }
.combo select { appearance: none; width: 100%; height: 20px; padding: 0 0 3px 1px; outline: 0; }
.combo::after { content: ""; position: absolute; right: 3px; top: 9px; border: 3px solid transparent; border-top-color: #000; border-bottom: 0; pointer-events: none; }
.combo.small { width: 57px; }
.combo.dim { width: 62px; gap: 2px; padding-left: 3px; }
.combo.dim svg { width: 16px; height: 16px; }
.picks { gap: 3px; padding: 0 18px 0 0; }
.picks::before { margin-right: -2px; }
.picks .sep { margin: 0 -1px 0 2px; }
.picks .tb:nth-of-type(2) { margin-left: 6px; }
.axes { margin-left: auto; margin-right: 23px; }
.axes .tb { padding-right: 12px; }
.stretch { flex: 1; padding-left: 0; }
.stretch .down { padding: 0 3px; gap: 2px; }
.stretch > .caret { margin: 0 3px 0 -3px; }

/* Workspace */
.workspace { display: flex; flex: 1; min-height: 0; }
.cap { display: flex; align-items: center; gap: 8px; height: 15px; flex: none; margin-top: 1px; padding-right: 4px; border: 1px solid #77756a; border-radius: 1px; }
.cap span { flex: 1; line-height: 12px; }
.cap svg { width: 10px; height: 10px; }
.nav { width: 84px; flex: none; display: flex; flex-direction: column; overflow: hidden; }
.nav .cap { border-left: 0; }
.slab { height: 22px; flex: none; text-align: left; border: solid #aca899; border-width: 1px 1px 1px 0; background: #ece9d8; }
.nav .cap + .slab { margin-top: 1px; }
.strip { height: 26px; margin-top: 1px; flex: none; background: linear-gradient(#fcfbf8, #eae6d5); }
.types { flex: 1; min-height: 0; overflow: hidden; margin: 1px 1px 0 0; padding: 0; list-style: none; background: #fff; border: solid #7f9db9; border-width: 1px 1px 1px 0; white-space: nowrap; }
.types li { height: 16px; text-indent: -5px; }
.types li.flush { text-indent: 0; }
.types .on { display: inline-block; height: 16px; width: 43px; background: #ece9d8; }
.types .fresh { display: flex; align-items: center; text-indent: -4px; }
.fresh svg { width: 16px; height: 16px; margin-left: 3px; }
.fresh em { align-self: flex-start; margin-top: -3px; text-indent: 0; font: bold 9px/10px "DejaVu Sans", sans-serif; text-shadow: 0 0 1px #fc0, 1px 0 #fd0, -1px 0 #fd0, 0 1px #fd0, 0 -1px #fd0; }
.foot { height: 5px; margin-top: 1px; overflow: hidden; text-align: left; flex: none; }

.list { width: 164px; margin-left: 4px; flex: none; display: flex; flex-direction: column; }
.listbar { margin-top: 1px; height: 25px; padding-left: 0; }
.find { display: flex; height: 25px; flex: none; margin-top: 1px; border-bottom: 1px solid #aca899; }
.find input { flex: 1; min-width: 0; margin: 0 0 0 1px; padding: 0 0 4px 2px; border: 1px solid #7f9db9; background: #fff; }
.find input::placeholder { color: #808080; opacity: 1; }
.find button { width: 25px; padding: 4px 4px; border-right: 1px solid #aca899; }
.find button svg { width: 16px; height: 16px; background: #fff; }
.tree { flex: 1; margin-top: 1px; background: #fff; border: 1px solid #7f9db9; border-bottom: 0; }
.node { display: flex; align-items: center; height: 16px; }
.node svg { width: 16px; height: 16px; }
.root { padding-left: 8px; }
.fold { width: 9px; height: 9px; margin-right: 7px; border: 1px solid #7b98b5; background: linear-gradient(#000, #000) center / 5px 1px no-repeat, #ece9d8; }
.root svg { width: 15px; height: 14px; margin-right: 4px; }
.leaf { margin-left: 32px; padding-left: 11px; position: relative; }
.leaf::before { content: ""; position: absolute; left: 0; top: 0; width: 11px; height: 8px; border: dotted #9a9a9a; border-width: 0 0 1px 1px; }
.leaf svg { width: 12px; height: 12px; }
.leaf span { height: 16px; margin-left: 5px; padding: 0 2px; }
.leaf .sel { background: #316ac5; color: #061a3c; padding-right: 4px; }

.main { flex: 1; min-width: 0; margin-left: 3px; display: flex; flex-direction: column; overflow: hidden; }
.main .row { padding-left: 2px; }
.model { flex: 1; min-height: 0; background: #000; }
.model svg, .board svg, .section svg { width: 100%; height: 100%; }
.axis text { fill: #c9c9c9; font: bold 15px "Liberation Sans", sans-serif; text-anchor: middle; }

/* Windows */
.win { position: absolute; display: flex; flex-direction: column; background: #ece9d8; }
.win > header { display: flex; align-items: center; flex: none; height: 22px; padding: 2px 2px 0 0; }
.win h2 { flex: 1; margin: 0; font: bold 12px/18px "Noto Sans CJK SC", sans-serif; }
.close { width: 13px; height: 13px; border: 1px solid #fff; border-radius: 2px; background: #e0492c; }
.close svg { width: 11px; height: 11px; }
.status { display: flex; gap: 2px; flex: none; height: 22px; padding-top: 2px; white-space: nowrap; overflow: hidden; border-top: 1px solid #fff; }
.status span { border: 1px solid #d0cdbb; border-bottom-color: #fff; padding-left: 1px; background: linear-gradient(#f8f7f2, #ece9da); overflow: hidden; flex: 1; line-height: 17px; }

.props { left: 116px; top: 295px; width: 427px; height: 627px; border: solid #6177d9; border-width: 0 4px 4px; }
.props > header { margin: 0 -4px; padding-left: 4px; background: linear-gradient(#5d70d4, #86a3e8 12%, #7b96de 60%, #7f9ce6); color: #d8e4f8; }
.props .close { background: #b8586c; }
.props > header .close { margin-right: 4px; }
.sheet { display: flex; height: 247px; flex: none; overflow: hidden; background: #fff; border: solid #7f9db9; border-width: 0 1px 1px 0; }
table { flex: 1; height: max-content; border-collapse: collapse; table-layout: fixed; }
th, td { height: 19px; padding: 0; border: solid #c0c0c0; border-width: 0 1px 1px 0; line-height: 16px; font-weight: normal; text-align: left; white-space: nowrap; overflow: hidden; }
th { text-align: center; background: linear-gradient(#fbfaf7, #ebe8d9); }
tbody th { font: 11px/16px "DejaVu Sans Mono", monospace; }
thead th { height: 23px; }
th.n { width: 22px; } th.name { width: 121px; } th.add { width: 31px; }
th.val { background: linear-gradient(#fad79c, #f1c05c); color: #5a0050; }
tbody td:nth-child(2) { padding-left: 20px; }
tbody td:nth-child(3) { padding: 0 0 1px 2px; }
.blue { color: #00f; }
.dim td { color: #808080; }
.cur th { background: #fbcb81; color: #5a0050; }
.cur td:nth-child(2) { background: #316ac5; color: #fff; }
.cur td:nth-child(3) { background: #e0e9f6; }
td input { appearance: none; display: block; width: 13px; height: 13px; margin: 0 0 0 9px; border: 1px solid #1c5180; background: linear-gradient(135deg, #dcdcd7, #fff); }
.group td:nth-child(2) { padding-left: 3px; }
.group button { width: 13px; height: 13px; margin-right: 4px; border: 1px solid #aaa; background: linear-gradient(#fff, #e6e3d6); color: #000; font: 13px/10px "DejaVu Sans Mono", monospace; vertical-align: 1px; }
.bar { display: inline-block; width: 12px; height: 12px; vertical-align: -2px; margin: 0 1px; }
.scroll { display: flex; flex-direction: column; width: 18px; flex: none; padding: 1px; background: #f5f4ef; }
.scroll button { height: 16px; flex: none; padding: 2px 3px; border: 1px solid #fff; border-radius: 2px; background: #c3d3fc; }
.scroll button svg { width: 10px; height: 10px; margin-left: -1px; }
.thumb { height: 178px; margin: 1px 0 auto; display: grid; place-items: center; border: 1px solid #98b1e4; border-radius: 2px; background: linear-gradient(90deg, #cbd9fd, #b9cbf5); }
.ridges { width: 7px; height: 8px; background: repeating-linear-gradient(#eef4fe 0 1px, #8ca8e0 1px 2px); }
.tabs { display: flex; align-items: flex-end; height: 23px; flex: none; padding: 0 2px; }
.tabs button { width: 46px; height: 19px; border: 1px solid #919b9c; border-bottom: 0; border-radius: 2px 2px 0 0; background: #f7f6f1; padding-right: 10px; }
.tabs .act { width: 52px; height: 20px; border-top: 3px solid #ffa91e; background: #fcfcfe; padding: 0 14px 2px 0; }
.page { flex: 1; min-height: 0; display: flex; flex-direction: column; padding: 1px 3px 2px; margin: 0 2px 3px 1px; border: 1px solid #919b9c; background: #ece9d8; }
.bars { gap: 8px; height: 25px; padding-right: 4px; }
.bars::before { margin-right: -3px; }
.bars button { height: 18px; padding: 0 1px; }
.bars .down { padding: 0 4px; margin: 0 -4px 0 -4px; }
.bars .sep { margin: 0 -2px 0 -1px; }
.bars .more { margin-left: auto; font: bold 12px/12px "DejaVu Sans", sans-serif; padding-bottom: 5px; }
.inforow { display: flex; align-items: center; height: 23px; }
.inforow .band { height: 22px; padding: 0; }
.inforow label { padding-left: 6px; }
.combo.rebar { width: 135px; height: 21px; margin-left: 1px; border: 1px solid #316ac5; }
.combo.rebar::after { right: 3px; }
.section { flex: 1; min-height: 0; margin-top: 2px; border: 2px solid #f00; background: #000; }
.section text { text-anchor: middle; stroke: none; }
.rule text { fill: #4c4c4c; font: 26px "DejaVu Sans", sans-serif; }
.tiny text { fill: #fff; font: bold 12px "DejaVu Sans", "Noto Sans CJK SC", sans-serif; }
.tiny text.lime { fill: #0f0; }
.smalldims path { marker-start: url(#ts); marker-end: url(#ts); }
.smalldims .bare { marker: none; }
.props .pos { flex: 0 0 148px; padding-left: 8px; }
.props .status { height: 24px; }

.poly { left: 557px; top: 91px; width: 758px; height: 638px; border: solid #0a3fdc; border-width: 0 4px 4px 3px; border-right-color: #0831c4; }
.poly > header { margin: 0 -4px 0 -3px; padding-left: 3px; padding-right: 6px; background: linear-gradient(#0a50d8, #1a72f4 12%, #0461ee 50%, #0a70ff 85%, #0450d0); color: #fff; }
.poly .band { border-radius: 0; height: 25px; }
.poly .gripped::before { margin-left: 4px; margin-right: 0; }
.coords label, .coords i { flex: none; }
.opt { display: flex; align-items: center; gap: 8px; margin-right: 10px; }
.opt input { appearance: none; width: 11px; height: 11px; border: 1px solid #8a887c; border-radius: 50%; background: #f5f4ee; }
.opt:first-of-type { margin-left: 2px; }
.opt input:checked { border-color: #222; background: radial-gradient(#000 0 2px, #fff 3px); }
.coords .sep { margin: 0 4px 0 0; }
.spin { position: relative; width: 78px; height: 20px; margin: 0 7px 0 9px; border: 1px solid #aca899; }
.spin input { width: 100%; height: 18px; padding-right: 17px; text-align: right; color: #aca899; font: 11px "DejaVu Sans Mono", monospace; }
.spin::before, .spin::after { content: ""; position: absolute; right: 4px; border: 3px solid transparent; }
.spin::before { top: 3px; border-bottom-color: #aca899; border-top: 0; }
.spin::after { bottom: 2px; border-top-color: #aca899; border-bottom: 0; }
.unit { margin-right: 14px; }
.board { flex: 1; min-height: 0; background: #000; }
.gray text { fill: #c0c0c0; font: 12px "Liberation Mono", monospace; text-anchor: middle; }
.dimtext text { fill: #0f0; font: bold 15px "Liberation Mono", monospace; text-anchor: middle; }
.h-ticks { marker: url(#th); }
.v-ticks { marker: url(#tv); }
.green-ticks { marker: url(#tg); }
.dyn { height: 23px; flex: none; border-bottom: 1px solid #aca899; }
.dyn button { height: 19px; margin-top: 1px; padding: 0 6px; background: linear-gradient(#fcfbf8, #f1efe4); }
.actions { display: flex; justify-content: flex-end; gap: 15px; height: 40px; flex: none; padding: 8px 13px 0 0; border-top: 1px solid #fff; }
.actions button { width: 72px; height: 24px; border: 1px solid #003c74; border-radius: 3px; background: linear-gradient(#fff, #ecebe6); }
.actions .ok { box-shadow: inset 0 0 0 2px #9db9ee; outline: 1px dotted #333; outline-offset: -4px; }
.poly .cell { flex: 0 0 147px; }

.notes { position: absolute; left: 0; top: 0; width: 100%; height: 100%; pointer-events: none; }
```
